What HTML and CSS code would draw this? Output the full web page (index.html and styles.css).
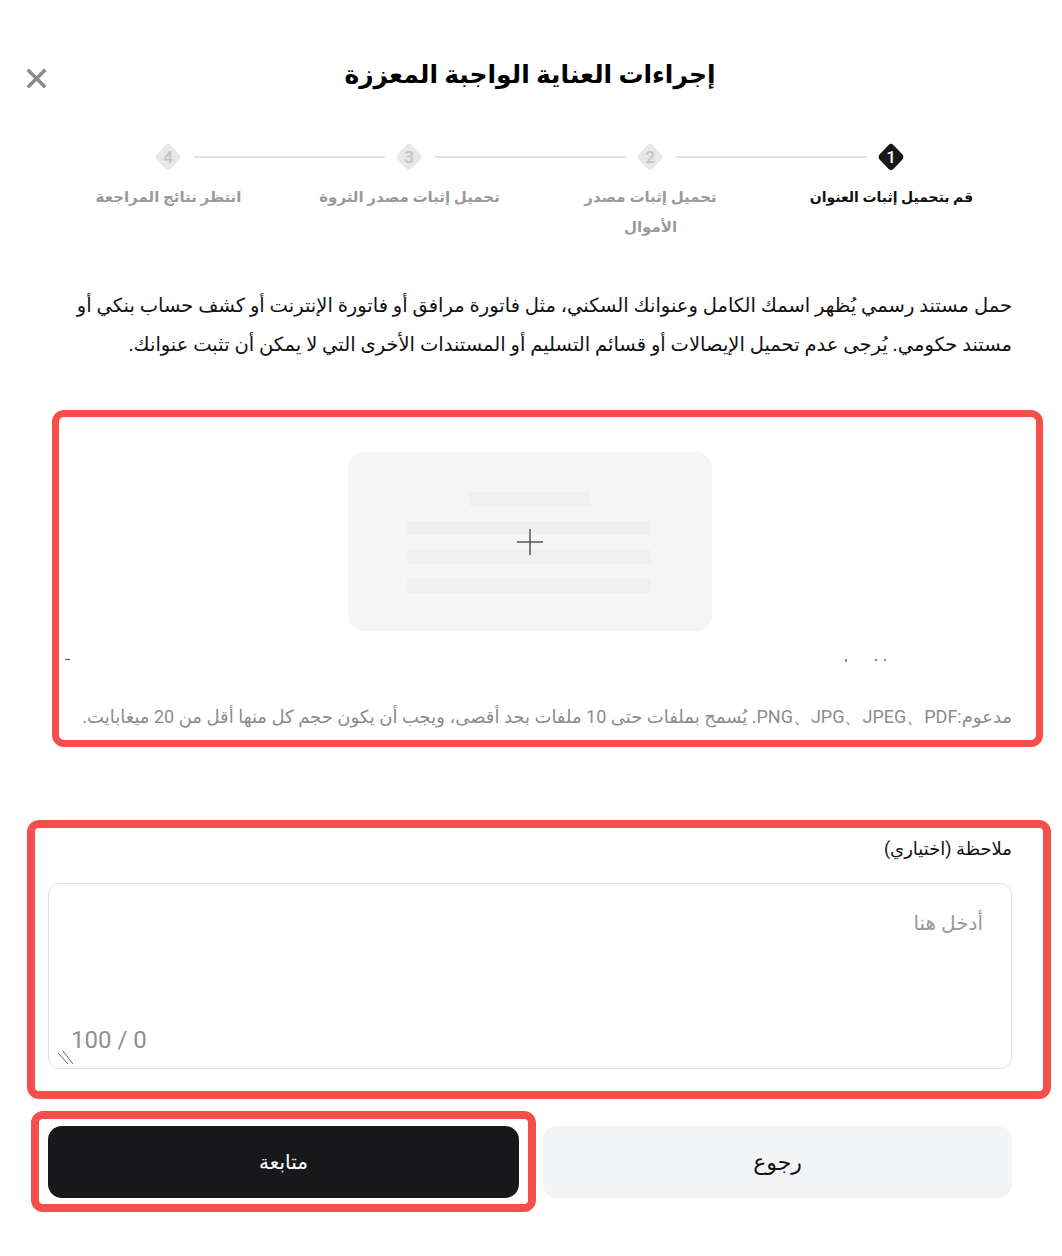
FILE: index.html
```html
<!DOCTYPE html>
<html lang="ar" dir="rtl">
<head>
    <meta charset="UTF-8">
    <meta name="viewport" content="width=device-width, initial-scale=1.0">
    <title>إجراءات العناية الواجبة المعززة</title>
    <link rel="stylesheet" href="styles.css">
</head>
<body>

    <div class="modal">
        <header class="modal-header">
            <h1>إجراءات العناية الواجبة المعززة</h1>
            <svg class="close-icon" viewBox="0 0 24 24" aria-hidden="true">
                <path d="M2 2 L22 22 M22 2 L2 22"/>
            </svg>
        </header>

        <ol class="steps">
            <li class="step active">
                <div class="step-track">
                    <span class="step-mark">
                        <svg viewBox="0 0 28 28"><path d="M11.6 1.9 a3.6 3.6 0 0 1 4.8 0 L25 11 a4 4 0 0 1 0 6 L16.4 26.1 a3.6 3.6 0 0 1 -4.8 0 L3 17 a4 4 0 0 1 0 -6 Z"/></svg>
                        <b>1</b>
                    </span>
                    <span class="step-line"></span>
                </div>
                <p>قم بتحميل إثبات العنوان</p>
            </li>
            <li class="step">
                <div class="step-track">
                    <span class="step-mark">
                        <svg viewBox="0 0 28 28"><path d="M11.6 1.9 a3.6 3.6 0 0 1 4.8 0 L25 11 a4 4 0 0 1 0 6 L16.4 26.1 a3.6 3.6 0 0 1 -4.8 0 L3 17 a4 4 0 0 1 0 -6 Z"/></svg>
                        <b>2</b>
                    </span>
                    <span class="step-line"></span>
                </div>
                <p>تحميل إثبات مصدر<br>الأموال</p>
            </li>
            <li class="step">
                <div class="step-track">
                    <span class="step-mark">
                        <svg viewBox="0 0 28 28"><path d="M11.6 1.9 a3.6 3.6 0 0 1 4.8 0 L25 11 a4 4 0 0 1 0 6 L16.4 26.1 a3.6 3.6 0 0 1 -4.8 0 L3 17 a4 4 0 0 1 0 -6 Z"/></svg>
                        <b>3</b>
                    </span>
                    <span class="step-line"></span>
                </div>
                <p>تحميل إثبات مصدر الثروة</p>
            </li>
            <li class="step last">
                <div class="step-track">
                    <span class="step-mark">
                        <svg viewBox="0 0 28 28"><path d="M11.6 1.9 a3.6 3.6 0 0 1 4.8 0 L25 11 a4 4 0 0 1 0 6 L16.4 26.1 a3.6 3.6 0 0 1 -4.8 0 L3 17 a4 4 0 0 1 0 -6 Z"/></svg>
                        <b>4</b>
                    </span>
                </div>
                <p>انتظر نتائج المراجعة</p>
            </li>
        </ol>

        <p class="intro">حمل مستند رسمي يُظهر اسمك الكامل وعنوانك السكني، مثل فاتورة مرافق أو فاتورة الإنترنت أو كشف حساب بنكي أو مستند حكومي. يُرجى عدم تحميل الإيصالات أو قسائم التسليم أو المستندات الأخرى التي لا يمكن أن تثبت عنوانك.</p>

        <section class="upload">
            <span class="mark mark-upload"></span>
            <div class="upload-card">
                <span class="bar bar-short"></span>
                <span class="bar"></span>
                <span class="bar"></span>
                <span class="bar"></span>
                <svg class="plus-icon" viewBox="0 0 26 26" aria-hidden="true">
                    <path d="M13 0 V26 M0 13 H26"/>
                </svg>
            </div>
            <div class="clipped-row">
                <i class="speck blue"></i>
                <i class="speck blue"></i>
                <i class="speck blue far"></i>
                <i class="speck dark"></i>
            </div>
            <p class="upload-hint">مدعوم:PNG、JPG、JPEG、PDF. يُسمح بملفات حتى 10 ملفات بحد أقصى، ويجب أن يكون حجم كل منها أقل من 20 ميغابايت.</p>
        </section>

        <section class="note">
            <span class="mark mark-note"></span>
            <label for="note">ملاحظة (اختياري)</label>
            <div class="note-box">
                <textarea id="note" placeholder="أدخل هنا"></textarea>
                <span class="counter" dir="ltr">100 / 0</span>
                <svg class="grip" viewBox="0 0 16 16" aria-hidden="true">
                    <path d="M1 3 L11 14 M6 1 L16 14"/>
                </svg>
            </div>
        </section>

        <div class="actions">
            <button class="btn btn-back" type="button">رجوع</button>
            <button class="btn btn-next" type="button">
                <span class="mark mark-next"></span>
                متابعة
            </button>
        </div>
    </div>

</body>
</html>
```

FILE: styles.css
```css
* {
    box-sizing: border-box;
}

body {
    font-family: Roboto, "DejaVu Sans", sans-serif;
    margin: 0;
    padding: 0;
    background-color: #fff;
    color: #000;
}

.modal {
    width: 1062px;
    height: 1256px;
    padding: 0 50px 0 48px;
    overflow: hidden;
}

/* header */
.modal-header {
    position: relative;
    height: 143px;
    padding-top: 57px;
}

.modal-header h1 {
    margin: 0;
    font-size: 25px;
    line-height: 36px;
    font-weight: 700;
    text-align: center;
}

.close-icon {
    position: absolute;
    left: -22px;
    top: 68px;
    width: 21px;
    height: 21px;
    fill: none;
    stroke: #8a8a8a;
    stroke-width: 4;
}

/* steps */
.steps {
    display: grid;
    grid-template-columns: repeat(4, 241px);
    margin: 0;
    padding: 0;
    list-style: none;
    height: 102px;
}

.step p {
    margin: 11px 0 0;
    font-size: 15px;
    line-height: 30px;
    font-weight: 700;
    text-align: center;
    color: #9a9a9a;
}

.step.active p {
    font-size: 14px;
    color: #111;
}

.step-track {
    display: flex;
    align-items: center;
    height: 28px;
    padding-right: 107px;
}

.step-mark {
    position: relative;
    flex: none;
    width: 28px;
    height: 28px;
    display: flex;
    align-items: center;
    justify-content: center;
}

.step-mark svg {
    position: absolute;
    inset: 0;
    width: 28px;
    height: 28px;
    fill: #e8e8e8;
}

.step-mark b {
    position: relative;
    font-size: 17px;
    font-weight: 500;
    color: #c4c4c4;
}

.step.active .step-mark svg {
    fill: #18181a;
}

.step.active .step-mark b {
    color: #fff;
}

.step-line {
    flex: none;
    width: 191px;
    height: 2px;
    margin-right: 10px;
    background-color: #e3e3e3;
}

/* intro */
.intro {
    margin: 41px 0 0;
    height: 78px;
    font-size: 19.5px;
    line-height: 39px;
    color: #111;
}

/* upload */
.upload {
    position: relative;
    margin-top: 46px;
    height: 337px;
    padding-top: 42px;
}

.mark {
    position: absolute;
    border: 8px solid #f54f4c;
    border-radius: 12px;
    pointer-events: none;
}

.mark-upload {
    top: 0;
    bottom: 0;
    left: 4px;
    right: -31px;
    border-width: 7px;
}

.mark-note {
    top: 0;
    bottom: 0;
    left: -21px;
    right: -39px;
}

.mark-next {
    top: -15px;
    bottom: -14px;
    left: -17px;
    right: -17px;
}

.upload-card {
    position: relative;
    width: 364px;
    height: 179px;
    margin: 0 auto;
    padding: 40px 2px 0 0;
    background-color: #f5f5f5;
    border-radius: 16px;
    display: flex;
    flex-direction: column;
    align-items: center;
    gap: 15px;
}

.bar {
    width: 244px;
    height: 14px;
    background-color: #f0f0f0;
}

.bar-short {
    width: 121px;
}

.plus-icon {
    position: absolute;
    top: 77px;
    left: 169px;
    width: 26px;
    height: 26px;
    fill: none;
    stroke: #555;
    stroke-width: 1.5;
}

/* what is left of the cut off preview text */
.clipped-row {
    display: flex;
    align-items: flex-start;
    height: 3px;
    margin-top: 28px;
    padding-right: 126px;
    gap: 7px;
}

.speck {
    display: block;
    width: 2px;
    height: 2px;
}

.speck.blue {
    background-color: #4a9fc4;
}

.speck.far {
    margin-right: 21px;
    height: 3px;
}

.speck.dark {
    margin-right: auto;
    margin-left: 17px;
    width: 5px;
    height: 1px;
    background-color: #555;
}

.upload-hint {
    margin: 43px 0 0;
    font-size: 18px;
    line-height: 24px;
    color: #8c8c8c;
    white-space: nowrap;
}

/* note */
.note {
    position: relative;
    margin-top: 73px;
    height: 279px;
    padding-top: 17px;
}

.note label {
    display: block;
    font-size: 18px;
    line-height: 24px;
    color: #111;
}

.note-box {
    position: relative;
    height: 186px;
    margin-top: 22px;
    border: 1px solid #ddd;
    border-radius: 12px;
    overflow: hidden;
}

.note-box textarea {
    display: block;
    width: 100%;
    height: 184px;
    padding: 24px 28px 0 0;
    border: none;
    outline: none;
    resize: none;
    font-family: Roboto, "DejaVu Sans", sans-serif;
    font-size: 20px;
    line-height: 30px;
}

.note-box textarea::placeholder {
    color: #999;
}

.counter {
    position: absolute;
    left: 22px;
    bottom: 12px;
    font-size: 24px;
    line-height: 32px;
    color: #8f8f8f;
}

.grip {
    position: absolute;
    left: 8px;
    bottom: 2px;
    width: 16px;
    height: 16px;
    fill: none;
    stroke: #666;
    stroke-width: 1;
}

/* buttons */
.actions {
    display: flex;
    gap: 24px;
    margin-top: 27px;
}

.btn {
    height: 72px;
    position: relative;
    border: none;
    border-radius: 14px;
    font-family: Roboto, "DejaVu Sans", sans-serif;
    font-size: 20px;
    cursor: pointer;
}

.btn-back {
    flex: 1 1 469px;
    font-size: 22px;
    background-color: #f3f4f6;
    color: #111;
}

.btn-next {
    flex: 1 1 471px;
    background-color: #18181a;
    color: #fff;
}
```
